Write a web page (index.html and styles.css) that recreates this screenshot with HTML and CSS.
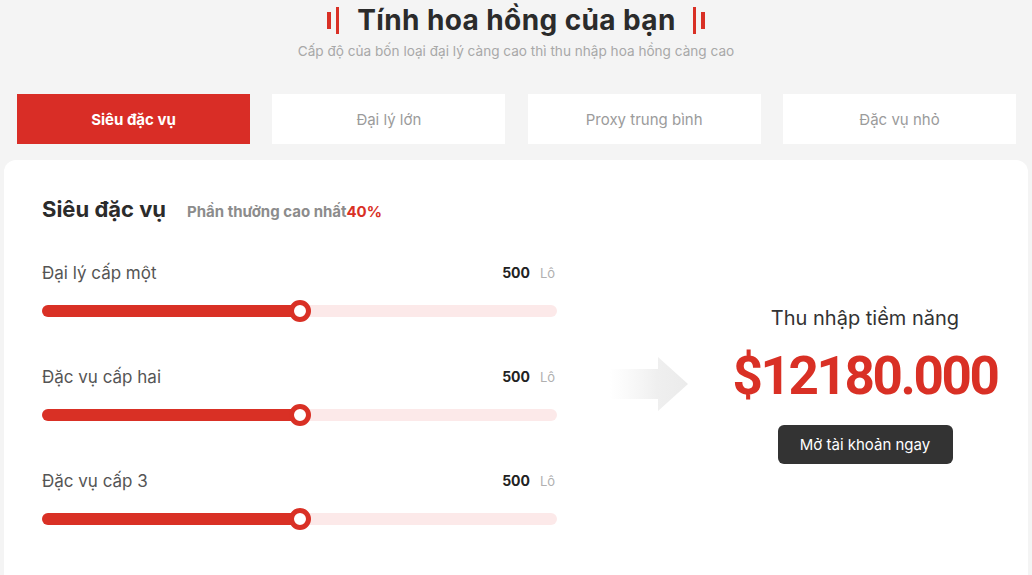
FILE: index.html
```html
<!DOCTYPE html>
<html lang="vi">
<head>
<meta charset="utf-8">
<link rel="stylesheet" href="styles.css">
</head>
<body>
<div class="page">
  <header class="head">
    <h1 class="title"><span class="bars bars-left"><i class="b short"></i><i class="b tall"></i></span>Tính hoa hồng của bạn<span class="bars bars-right"><i class="b tall"></i><i class="b short"></i></span></h1>
    <p class="sub">Cấp độ của bốn loại đại lý càng cao thì thu nhập hoa hồng càng cao</p>
  </header>
  <nav class="tabs">
    <div class="tab active">Siêu đặc vụ</div>
    <div class="tab">Đại lý lớn</div>
    <div class="tab">Proxy trung bình</div>
    <div class="tab">Đặc vụ nhỏ</div>
  </nav>
  <section class="card">
    <div class="left">
      <div class="card-head">
        <h2 class="card-title">Siêu đặc vụ</h2>
        <span class="reward">Phần thưởng cao nhất<em>40%</em></span>
      </div>
      <div class="row">
        <div class="row-top"><span class="label">Đại lý cấp một</span><span class="val"><b>500</b><span class="unit">Lô</span></span></div>
        <div class="track"><div class="fill" style="width:50%"><span class="thumb"></span></div></div>
      </div>
      <div class="row">
        <div class="row-top"><span class="label">Đặc vụ cấp hai</span><span class="val"><b>500</b><span class="unit">Lô</span></span></div>
        <div class="track"><div class="fill" style="width:50%"><span class="thumb"></span></div></div>
      </div>
      <div class="row">
        <div class="row-top"><span class="label">Đặc vụ cấp 3</span><span class="val"><b>500</b><span class="unit">Lô</span></span></div>
        <div class="track"><div class="fill" style="width:50%"><span class="thumb"></span></div></div>
      </div>
    </div>
    <div class="arrow">
      <svg width="78" height="54" viewBox="0 0 78 54">
        <defs>
          <linearGradient id="g" x1="0" y1="0" x2="1" y2="0">
            <stop offset="0" stop-color="#f2f2f2" stop-opacity="0"/>
            <stop offset="0.6" stop-color="#efefef"/>
            <stop offset="1" stop-color="#ebebeb"/>
          </linearGradient>
        </defs>
        <path d="M0 12 H48 V0 L78 27 L48 54 V42 H0 Z" fill="url(#g)"/>
      </svg>
    </div>
    <div class="right">
      <div class="income-label">Thu nhập tiềm năng</div>
      <div class="income">$12180.000</div>
      <button class="cta">Mở tài khoản ngay</button>
    </div>
  </section>
</div>
</body>
</html>
```

FILE: styles.css
```css
* { box-sizing: border-box; }
html, body { margin: 0; padding: 0; }
body {
  background: #f4f4f4;
  font-family: Inter, "Noto Sans", "Liberation Sans", sans-serif;
  color: #2b2b2b;
  width: 1032px;
  height: 575px;
  overflow: hidden;
}
.page { padding: 0 4px; }
.head { text-align: center; padding-top: 3px; }
.title {
  margin: 0;
  font-size: 28px;
  font-weight: 700;
  line-height: 34px;
  color: #2b2b2b;
  display: flex;
  justify-content: center;
  align-items: center;
  letter-spacing: 0.4px;
}
.bars { display: inline-flex; align-items: center; gap: 5px; height: 34px; }
.bars-left { margin-right: 18px; }
.bars-right { margin-left: 17px; }
.b { display: block; background: #d93025; }
.b.short { width: 4px; height: 17px; }
.b.tall { width: 3px; height: 27px; }
.sub {
  margin: 5px 0 0;
  font-size: 13.6px;
  color: #a8a8a8;
  line-height: 18px;
}
.tabs {
  display: flex;
  gap: 22.33px;
  padding: 0 12px 0 13px;
  margin-top: 34px;
}
.tab {
  flex: 1;
  height: 50px;
  background: #fff;
  display: flex;
  align-items: center;
  justify-content: center;
  font-size: 15px;
  color: #9b9b9b;
}
.tab.active { background: #d92d26; color: #fff; font-weight: 700; }
.card {
  margin-top: 16px;
  background: #fff;
  border-radius: 12px;
  height: 440px;
  display: flex;
  padding: 34px 0 0 38px;
}
.left { width: 515px; }
.card-head { display: flex; align-items: baseline; gap: 21px; }
.card-title { margin: 0; font-size: 22px; font-weight: 700; color: #2b2b2b; line-height: 30px; }
.reward { font-size: 15px; font-weight: 700; color: #8c8c8c; }
.reward em { font-style: normal; color: #d93025; }
.row { margin-top: 38px; }
.row + .row { margin-top: 49px; }
.row-top { display: flex; justify-content: space-between; align-items: center; line-height: 22px; }
.label { font-size: 17px; color: #555; }
.val { font-size: 14px; display: flex; align-items: center; }
.val b { color: #222; font-weight: 700; }
.unit { color: #b0b0b0; margin-left: 10px; font-size: 13px; width: 17px; }
.track {
  margin-top: 21px;
  height: 12px;
  border-radius: 6px;
  background: #fce9e9;
  position: relative;
}
.fill {
  height: 12px;
  border-radius: 6px;
  background: #d93025;
  position: relative;
}
.thumb {
  position: absolute;
  right: -11px;
  top: -5px;
  width: 22px;
  height: 22px;
  border-radius: 50%;
  background: #fff;
  border: 5px solid #d93025;
}
.arrow { margin-left: 53px; margin-top: 163px; height: 54px; }
.arrow svg { display: block; }
.right {
  flex: 1;
  display: flex;
  flex-direction: column;
  align-items: center;
  padding-top: 110px;
  padding-left: 14px;
}
.income-label { font-size: 20px; color: #333; line-height: 28px; }
.income {
  font-family: Roboto, Inter, sans-serif;
  font-size: 53px;
  font-weight: 700;
  color: #d93025;
  line-height: 60px;
  margin-top: 14px;
  letter-spacing: -2.4px;
}
.cta {
  margin-top: 19px;
  background: #333;
  color: #fff;
  border: 0;
  border-radius: 6px;
  height: 39px;
  width: 175px;
  font-family: inherit;
  font-size: 15px;
}
```
